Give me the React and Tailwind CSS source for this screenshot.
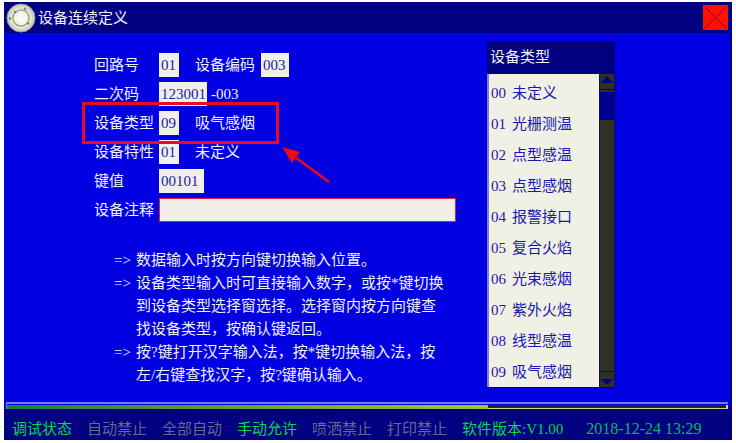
import { useState } from 'react'

const deviceTypes = [
  '未定义',
  '光栅测温',
  '点型感温',
  '点型感烟',
  '报警接口',
  '复合火焰',
  '光束感烟',
  '紫外火焰',
  '线型感温',
  '吸气感烟',
]

const hints = [
  '数据输入时按方向键切换输入位置。',
  '设备类型输入时可直接输入数字，或按*键切换到设备类型选择窗选择。选择窗内按方向键查找设备类型，按确认键返回。',
  '按?键打开汉字输入法，按*键切换输入法，按左/右键查找汉字，按?键确认输入。',
]

const statuses = [
  { text: '调试状态', on: true },
  { text: '自动禁止', on: false },
  { text: '全部自动', on: false },
  { text: '手动允许', on: true },
  { text: '喷洒禁止', on: false },
  { text: '打印禁止', on: false },
]

function Field({ id, value, onChange, className }) {
  return (
    <input
      id={id}
      value={value}
      onChange={(e) => onChange(e.target.value)}
      className={`h-6 bg-[#f0f0e8] pl-[2px] text-[#2020a8] outline-none ${className}`}
    />
  )
}

function Row({ label, id, children }) {
  return (
    <div className="relative flex h-6 items-center">
      <label htmlFor={id} className="w-[65px] shrink-0 whitespace-nowrap">
        {label}
      </label>
      {children}
    </div>
  )
}

function DetectorIcon() {
  return (
    <svg viewBox="0 0 30 30" className="h-[30px] w-[30px]">
      <circle cx="15" cy="15" r="14" fill="#d0d4bc" stroke="#9098a0" />
      <circle cx="15" cy="15" r="11" fill="#e4e6d0" />
      <circle cx="15" cy="15" r="8" fill="#f2f2e8" stroke="#a0a494" strokeWidth="1.5" />
      <circle cx="15" cy="15" r="5" fill="#f8f8f2" />
      <path d="M18 5l2 2M4 14v3M8 8l2 2M21 20l2 1" stroke="#707468" strokeWidth="1.5" />
    </svg>
  )
}

function TitleBar() {
  return (
    <header className="flex h-[31px] items-center bg-[#000080] pr-[2px] pl-[2px]">
      <DetectorIcon />
      <h1 className="ml-[2px] flex-1">设备连续定义</h1>
      <button type="button" aria-label="关闭" className="h-[25px] w-[25px] bg-[#ff1000]">
        <svg viewBox="0 0 25 25" className="h-full w-full">
          <path d="M2 2l21 21M23 2L2 23" stroke="#8c0030" fill="none" />
        </svg>
      </button>
    </header>
  )
}

function DeviceForm() {
  const [form, setForm] = useState({
    loop: '01',
    code: '003',
    second: '123001',
    type: '09',
    feature: '01',
    key: '00101',
    note: '',
  })
  const bind = (name) => ({
    id: name,
    value: form[name],
    onChange: (value) => setForm({ ...form, [name]: value }),
  })

  return (
    <form className="flex flex-col gap-[5px]">
      <Row label="回路号" id="loop">
        <Field {...bind('loop')} className="w-5" />
        <label htmlFor="code" className="ml-4 w-[66px]">
          设备编码
        </label>
        <Field {...bind('code')} className="w-7" />
      </Row>
      <Row label="二次码" id="second">
        <Field {...bind('second')} className="w-12" />
        <span className="ml-1">-003</span>
      </Row>
      <Row label="设备类型" id="type">
        <Field {...bind('type')} className="w-5" />
        <span className="ml-4">吸气感烟</span>
        <Callout />
      </Row>
      <Row label="设备特性" id="feature">
        <Field {...bind('feature')} className="w-5" />
        <span className="ml-4">未定义</span>
      </Row>
      <Row label="键值" id="key">
        <Field {...bind('key')} className="w-[45px]" />
      </Row>
      <Row label="设备注释" id="note">
        <Field {...bind('note')} className="min-w-0 flex-1 border border-solid border-[#e81840]" />
      </Row>
    </form>
  )
}

// 红框与箭头标注
function Callout() {
  return (
    <div className="pointer-events-none absolute -top-[9px] -left-3 z-10 h-[42px] w-[197px] border-3 border-[#e80c20]">
      <svg viewBox="0 0 50 40" className="absolute top-10 left-[196px] h-10 w-[50px]">
        <path d="M48 37L14 12" stroke="#f00814" strokeWidth="2.5" />
        <path d="M1 2L19 7L11 18Z" fill="#f00814" />
      </svg>
    </div>
  )
}

function Hints() {
  return (
    <ul className="mt-[27px] ml-5 leading-[23px]">
      {hints.map((hint) => (
        <li key={hint} className="flex">
          <span className="w-[22px] shrink-0">=&gt;</span>
          <p className="max-w-[312px]">{hint}</p>
        </li>
      ))}
    </ul>
  )
}

function TypeList() {
  return (
    <section className="w-32 shrink-0 border-b border-[#000080]">
      <h2 className="h-[33px] bg-[#000080] pl-[3px] leading-[33px]">设备类型</h2>
      <div className="flex">
        <ul className="flex-1 border-l-2 border-[#8080d0] bg-[#f0f0e4] pt-[3px] text-[#1818b0]">
          {deviceTypes.map((name, i) => (
            <li key={name} className="flex h-[31px] items-center pl-[2px]">
              <span className="w-[21px]">{String(i).padStart(2, '0')}</span>
              {name}
            </li>
          ))}
        </ul>
        <div className="flex w-4 flex-col border-x border-[#101040] bg-[#303028]">
          <svg viewBox="0 0 14 16" className="h-4 w-full">
            <path d="M1 9L7 2L13 9Z" fill="#000090" />
            <path d="M0 15.5h14" stroke="#000060" />
          </svg>
          <div className="mt-[2px] h-7 bg-[#000090]" />
          <div className="flex-1" />
          <svg viewBox="0 0 14 16" className="h-4 w-full">
            <path d="M1 8L7 14L13 8Z" fill="#000090" />
            <path d="M0 .5h14" stroke="#000090" />
          </svg>
        </div>
      </div>
    </section>
  )
}

function StatusBar() {
  return (
    <footer>
      <div className="mx-[2px] border-t-2 border-l border-[#7878f0] pt-px">
        <div className="flex h-1 bg-[#202830]">
          <div className="w-2/3 bg-linear-to-r from-[#108040] to-[#a0c830]" />
          <div className="flex-1 border-r-2 border-b border-[#d0d890]" />
        </div>
      </div>
      <div className="flex h-[31px] items-end gap-[15px] bg-[#000080] pl-2 leading-[22px] whitespace-nowrap">
        {statuses.map((s) => (
          <span key={s.text} className={s.on ? 'text-[#00d850]' : 'text-[#686890]'}>
            {s.text}
          </span>
        ))}
        <span className="text-[#00d850]">软件版本:V1.00</span>
        <time className="ml-2 text-base leading-[22px] text-[#00b868]">2018-12-24 13:29</time>
      </div>
    </footer>
  )
}

export default function App() {
  return (
    <div className="min-h-screen bg-white pt-[2px] pr-1 pb-[3px] pl-1 font-['Liberation_Serif','Noto_Sans_CJK_SC',sans-serif] text-[15px] leading-6 text-[#f0f0ff]">
      <div className="border-r-2 border-[#000080] bg-[#0000e0]">
        <TitleBar />
        <main className="flex gap-[31px] pt-2 pr-[115px] pb-[14px] pl-[90px]">
          <div className="min-w-0 flex-1 pt-3">
            <DeviceForm />
            <Hints />
          </div>
          <TypeList />
        </main>
        <StatusBar />
      </div>
    </div>
  )
}
